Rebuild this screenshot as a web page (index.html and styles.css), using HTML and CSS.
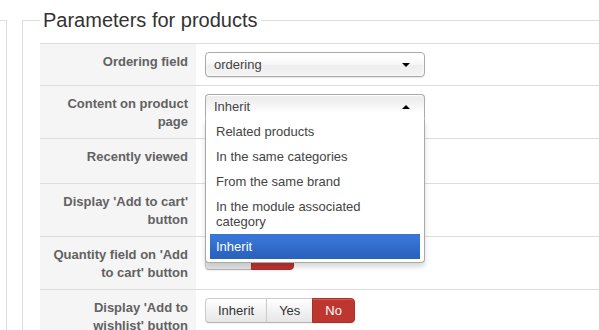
FILE: index.html
```html
<!DOCTYPE html>
<html>
<head>
<meta charset="utf-8">
<title>Parameters for products</title>
<link rel="stylesheet" href="styles.css">
</head>
<body>
<div class="page">
  <div class="prev-box"></div>
  <fieldset class="params">
    <legend>Parameters for products</legend>
    <table class="form-table">
      <tr>
        <th>Ordering field</th>
        <td>
          <div class="chosen">
            <div class="chosen-single"><span>ordering</span><b class="caret"></b></div>
          </div>
        </td>
      </tr>
      <tr>
        <th>Content on product page</th>
        <td>
          <div class="chosen open">
            <div class="chosen-single"><span>Inherit</span><b class="caret up"></b></div>
            <div class="chosen-drop">
              <ul class="results">
                <li>Related products</li>
                <li>In the same categories</li>
                <li>From the same brand</li>
                <li>In the module associated category</li>
                <li class="hl">Inherit</li>
              </ul>
            </div>
          </div>
        </td>
      </tr>
      <tr>
        <th>Recently viewed</th>
        <td class="tall"><div class="placeholder"></div></td>
      </tr>
      <tr>
        <th>Display 'Add to cart' button</th>
        <td><div class="placeholder"></div></td>
      </tr>
      <tr>
        <th>Quantity field on 'Add to cart' button</th>
        <td>
          <div class="btn-group">
            <span class="btn">Yes</span><span class="btn no">No</span>
          </div>
        </td>
      </tr>
      <tr>
        <th>Display 'Add to wishlist' button</th>
        <td>
          <div class="btn-group">
            <span class="btn">Inherit</span><span class="btn">Yes</span><span class="btn no">No</span>
          </div>
        </td>
      </tr>
    </table>
  </fieldset>
</div>
</body>
</html>
```
FILE: styles.css
```css
html, body {
  margin: 0;
  background: #fff;
  overflow: hidden;
}
body {
  font-family: "Liberation Sans", Arial, sans-serif;
  color: #333;
}
.page {
  display: flex;
  align-items: flex-start;
  width: 720px;
}
.prev-box {
  flex: none;
  width: 6px;
  height: 400px;
  margin-top: 20px;
  border-top: 1px solid #ddd;
  border-right: 1px solid #ddd;
}
.params {
  flex: none;
  width: 640px;
  min-width: 0;
  margin: 8px 0 0 15px;
  padding: 0 0 20px 17px;
  border: 1px solid #ddd;
}
.params legend {
  font-size: 20px;
  line-height: 24px;
  padding: 0 3px;
  color: #333;
}
.form-table {
  border-collapse: collapse;
  width: 640px;
  margin-top: 11px;
}
.form-table th,
.form-table td {
  border-top: 1px solid #ddd;
  vertical-align: top;
}
.form-table th {
  width: 140px;
  padding: 9px 8px 7px;
  background: #f5f5f5;
  text-align: right;
  font-size: 13px;
  font-weight: bold;
  line-height: 18px;
  color: #626262;
}
.form-table td {
  padding: 8px 9px;
  background: #fff;
}
.form-table td.tall {
  padding-bottom: 11px;
}
.placeholder {
  height: 25px;
}

/* select (chosen style) */
.chosen {
  position: relative;
  width: 220px;
  height: 25px;
  font-size: 13px;
}
.chosen-single {
  box-sizing: border-box;
  height: 25px;
  display: flex;
  align-items: center;
  justify-content: space-between;
  padding: 0 14px 0 8px;
  border: 1px solid #aaa;
  border-radius: 4px;
  background: linear-gradient(#fff 20%, #f6f6f6 50%, #eee 52%, #f4f4f4 100%);
  box-shadow: inset 0 0 3px #fff, 0 1px 1px rgba(0, 0, 0, 0.1);
  color: #444;
  line-height: 23px;
}
.caret {
  width: 0;
  height: 0;
  border-left: 4px solid transparent;
  border-right: 4px solid transparent;
  border-top: 4px solid #000;
}
.caret.up {
  border-top: 0;
  border-bottom: 4px solid #000;
}
.open .chosen-single {
  border-radius: 4px 4px 0 0;
  border-bottom-color: #fff;
  background: linear-gradient(#eee 20%, #fff 80%);
  box-shadow: inset 0 1px 0 #fff;
}
.chosen-drop {
  position: absolute;
  top: 25px;
  left: 0;
  right: 0;
  z-index: 10;
  background: #fff;
  border: 1px solid #aaa;
  border-top: 0;
  border-radius: 0 0 4px 4px;
  box-shadow: 0 4px 5px rgba(0, 0, 0, 0.15);
  padding: 0 4px 3px 4px;
}
.results {
  list-style: none;
  margin: 0;
  padding: 0;
}
.results li {
  padding: 5px 16px 5px 6px;
  line-height: 15px;
  color: #444;
}
.results li.hl {
  background: linear-gradient(#3875d7 20%, #2a62bc 90%);
  color: #fff;
}

/* button groups */
.btn-group {
  display: flex;
}
.btn {
  box-sizing: border-box;
  height: 25px;
  padding: 0 12px;
  line-height: 23px;
  font-size: 13px;
  border: 1px solid #ccc;
  border-bottom-color: #b3b3b3;
  background: linear-gradient(#fff, #e6e6e6);
  color: #333;
  box-shadow: inset 0 1px 0 rgba(255, 255, 255, 0.2), 0 1px 2px rgba(0, 0, 0, 0.05);
}
.btn + .btn {
  margin-left: -1px;
}
.btn:first-child {
  border-radius: 4px 0 0 4px;
}
.btn:last-child {
  border-radius: 0 4px 4px 0;
}
.btn.no {
  background: #bd362f;
  border-color: #a9302a;
  color: #fff;
}
```
